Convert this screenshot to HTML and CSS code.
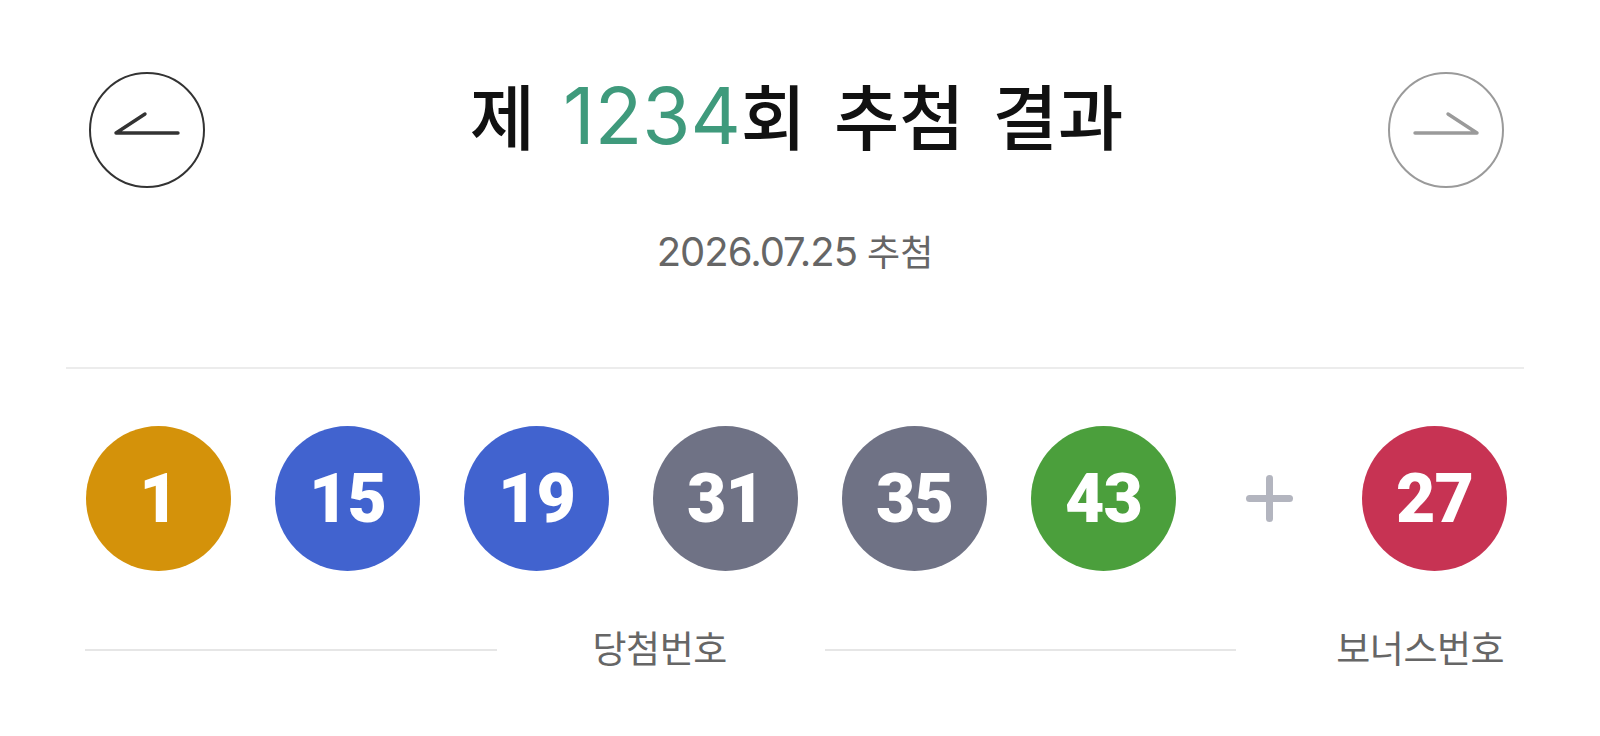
FILE: index.html
```html
<!DOCTYPE html>
<html lang="ko">

<head>
    <meta charset="UTF-8">
    <meta name="viewport" content="width=device-width, initial-scale=1.0">
    <title>로또 추첨 결과</title>
    <link rel="stylesheet" href="styles.css">
</head>

<body>
    <div class="container">
        <div class="header">
            <button class="arrowbtn prev" aria-label="이전 회차">
                <svg width="116" height="116" viewBox="0 0 116 116">
                    <circle cx="58" cy="58" r="57" fill="none" stroke="currentColor" stroke-width="2" />
                    <path d="M89 61H27L56 42" fill="none" stroke="currentColor" stroke-width="3.4" stroke-linecap="round" stroke-linejoin="round" />
                </svg>
            </button>
            <h1 class="title">제 <span class="round">1234</span>회 추첨 결과</h1>
            <button class="arrowbtn next" aria-label="다음 회차">
                <svg width="116" height="116" viewBox="0 0 116 116">
                    <circle cx="58" cy="58" r="57" fill="none" stroke="currentColor" stroke-width="2" />
                    <path d="M27 61H89L60 42" fill="none" stroke="currentColor" stroke-width="3.4" stroke-linecap="round" stroke-linejoin="round" />
                </svg>
            </button>
        </div>

        <p class="date"><span class="datenum">2026.07.25</span> 추첨</p>

        <hr class="divider">

        <div class="balls">
            <span class="ball yellow">1</span>
            <span class="ball blue">15</span>
            <span class="ball blue">19</span>
            <span class="ball gray">31</span>
            <span class="ball gray">35</span>
            <span class="ball green">43</span>
            <span class="plus"></span>
            <span class="ball red">27</span>
        </div>

        <div class="labels">
            <span class="line"></span>
            <span class="label main">당첨번호</span>
            <span class="line"></span>
            <span class="label bonus">보너스번호</span>
        </div>
    </div>
</body>

</html>
```

FILE: styles.css
```css
* {
    margin: 0;
    padding: 0;
    box-sizing: border-box;
}

body {
    background-color: #fff;
    font-family: "Noto Sans CJK KR", "Noto Sans", sans-serif;
    color: #111;
}

.container {
    width: 1458px;
    margin-left: 66px;
}

.header {
    display: flex;
    align-items: center;
    justify-content: space-between;
    padding: 72px 20px 0 23px;
}

.arrowbtn {
    width: 116px;
    height: 116px;
    border: none;
    background: none;
    cursor: pointer;
}

.arrowbtn svg {
    display: block;
}

.prev {
    color: #333;
}

.next {
    color: #9a9a9a;
}

.title {
    font-size: 71px;
    font-weight: 500;
    line-height: 1;
    word-spacing: 8px;
    margin-bottom: 28px;
}

.round {
    font-family: "Inter", sans-serif;
    font-weight: 400;
    font-size: 78px;
    letter-spacing: 0;
    color: #3f9a7c;
}

.date {
    text-align: center;
    margin-top: 44px;
    font-size: 36px;
    line-height: 1;
    color: #666;
}

.datenum {
    font-family: "Inter", sans-serif;
    font-size: 40px;
    letter-spacing: -1px;
}

.divider {
    border: none;
    height: 2px;
    background-color: #ececec;
    margin-top: 95px;
}

.balls {
    display: flex;
    align-items: center;
    gap: 44px;
    margin-top: 57px;
    padding-left: 20px;
}

.ball {
    width: 145px;
    height: 145px;
    border-radius: 50%;
    display: flex;
    align-items: center;
    justify-content: center;
    font-family: "Roboto", sans-serif;
    font-weight: 900;
    font-size: 68px;
    letter-spacing: -1px;
    color: #fff;
}

.yellow {
    background-color: #d4920a;
}

.blue {
    background-color: #4163cf;
}

.gray {
    background-color: #6f7285;
}

.green {
    background-color: #4b9f3c;
}

.red {
    background-color: #c73353;
}

/* 보너스 번호 앞의 + 기호 */
.plus {
    position: relative;
    width: 47px;
    height: 47px;
    margin: 0 25px 0 26px;
}

.plus::before,
.plus::after {
    content: "";
    position: absolute;
    background-color: #b3b5bf;
    border-radius: 4px;
}

.plus::before {
    left: 0;
    right: 0;
    top: 20px;
    height: 7px;
}

.plus::after {
    top: 0;
    bottom: 0;
    left: 20px;
    width: 7px;
}

.labels {
    display: flex;
    align-items: center;
    margin-top: 58px;
    padding: 0 20px 0 19px;
}

.line {
    flex: 1;
    height: 2px;
    background-color: #e6e6e6;
    margin-top: 5px;
}

.label {
    font-size: 37px;
    line-height: 1;
    letter-spacing: -0.5px;
    color: #666;
}

.main {
    margin: 0 98px 0 96px;
}

.bonus {
    margin-left: 100px;
}
```
